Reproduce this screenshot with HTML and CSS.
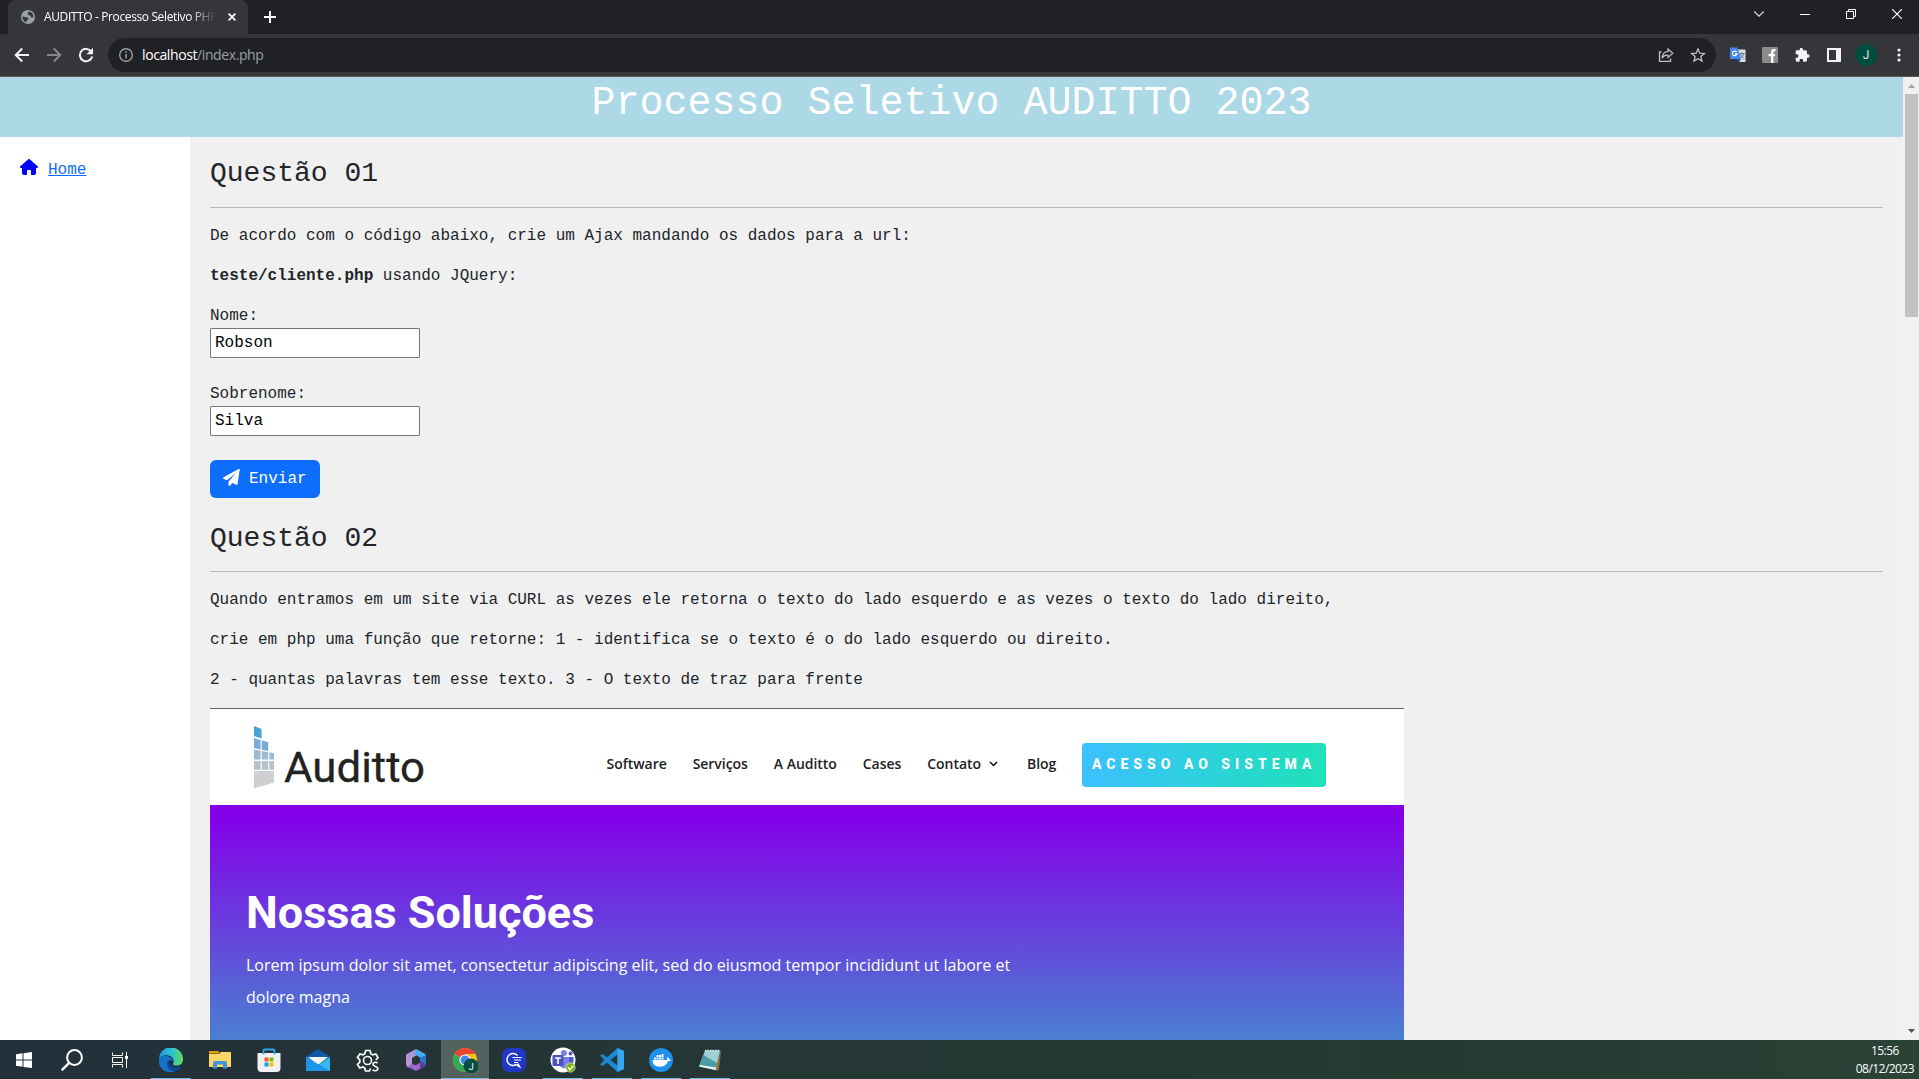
FILE: index.html
```html
<!DOCTYPE html>
<html lang="pt-BR">
<head>
<meta charset="utf-8">
<title>AUDITTO - Processo Seletivo PHP</title>
<link rel="stylesheet" href="styles.css">
</head>
<body>
<div class="tabstrip">
  <div class="tab">
    <svg class="globe" width="14" height="14" viewBox="0 0 14 14"><circle cx="7" cy="7" r="7" fill="#9aa0a6"/><path d="M1.5 6.2L4.3 7.3 7 7.6 7.4 9.4 5.6 10.6 5.4 12.4C3 11.800 1.300 9.500 1.500 6.200zM8 1.600L6.800 3.600 7.300 5.200 9.600 5.600 10 7.600 12.400 7.500C12.600 4.400 10.600 2 8 1.600z" fill="#35363a"/></svg>
    <span class="tab-title">AUDITTO - Processo Seletivo PHP</span>
    <svg class="tab-close" width="8" height="8" viewBox="0 0 8 8"><path d="M.6.6l6.800 6.800M7.400.6L.6 7.400" stroke="#fff" stroke-width="1.700"/></svg>
  </div>
  <svg class="newtab" width="12" height="12" viewBox="0 0 12 12"><path d="M6 0v12M0 6h12" stroke="#fff" stroke-width="2"/></svg>
  <div class="win">
    <svg width="10" height="10" viewBox="0 0 10 10"><path d="M.3 2.500L5 7.200 9.700 2.500" fill="none" stroke="#ddd" stroke-width="1.100"/></svg>
    <svg width="10" height="10" viewBox="0 0 10 10"><path d="M0 5.500h10" stroke="#fff"/></svg>
    <svg width="10" height="10" viewBox="0 0 10 10"><path d="M.5 2.500h7v7h-7zM2.500 2V.5h7v7H8" fill="none" stroke="#fff"/></svg>
    <svg width="10" height="10" viewBox="0 0 10 10"><path d="M0 0l10 10M10 0L0 10" stroke="#fff" stroke-width="1.100"/></svg>
  </div>
</div>
<div class="toolbar">
  <svg class="nav-ic" width="16" height="16" viewBox="0 0 16 16"><path d="M15 8H2M8.200 1.500L1.700 8l6.500 6.500" fill="none" stroke="#f1f3f4" stroke-width="2"/></svg>
  <svg class="nav-ic" width="16" height="16" viewBox="0 0 16 16"><path d="M1 8h13M7.800 1.500L14.300 8l-6.500 6.500" fill="none" stroke="#85878a" stroke-width="2"/></svg>
  <svg class="nav-ic" width="16" height="16" viewBox="0 0 16 16"><path d="M13.300 4.600A6.200 6.200 0 1 0 14.200 9.500" fill="none" stroke="#f1f3f4" stroke-width="2"/><path d="M15 .8v6.500H8.500z" fill="#f1f3f4"/></svg>
  <div class="omnibox">
    <svg width="14" height="14" viewBox="0 0 14 14"><circle cx="7" cy="7" r="6.300" fill="none" stroke="#9aa0a6" stroke-width="1.400"/><path d="M7 6v4.500M7 3.200v1.600" stroke="#9aa0a6" stroke-width="1.500"/></svg>
    <span class="url"><b>localhost</b>/index.php</span>
    <svg class="share" width="16" height="16" viewBox="0 0 16 16"><path d="M3.500 5H1.500v9.300h11V11.500" fill="none" stroke="#bdc1c6" stroke-width="1.300"/><path d="M10 2l4.800 4.300L10 10.500V8.200C7 8 5.200 9 4 11.200 4.300 7.500 6.300 4.800 10 4.400z" fill="none" stroke="#bdc1c6" stroke-width="1.200"/></svg>
    <svg width="16" height="16" viewBox="0 0 16 16"><path d="M8 2l1.800 4.200 4.600.4-3.500 3 1.100 4.500L8 11.700l-4 2.400 1.100-4.500-3.500-3 4.600-.4z" fill="none" stroke="#bdc1c6" stroke-width="1.300"/></svg>
  </div>
  <div class="exts">
    <svg width="16" height="16" viewBox="0 0 16 16"><path d="M7 2.500h8.500v12.500H9z" fill="#dadce0"/><path d="M9.500 6.500h5M12 5.500v1M10.300 6.500c.8 2.500 2 4 3.500 5M13.700 6.500c-.6 2.500-2 4-3.700 5" stroke="#5f7d8c" fill="none"/><path d="M0 .5h7.500L11 12H0z" fill="#4285f4"/><path d="M7 12h4l-2 3.500z" fill="#2a56c6"/><path d="M6.600 5A2.300 2.300 0 1 0 7 6.700H4.800" fill="none" stroke="#fff" stroke-width="1.200"/></svg>
    <svg width="16" height="16" viewBox="0 0 16 16"><rect width="16" height="16" rx="1" fill="#8b8b8b"/><path d="M13.500 3.200H12q-1.800 0-1.800 1.800V16M6.500 8.200h6.500" fill="none" stroke="#fff" stroke-width="2.300"/></svg>
    <svg width="16" height="16" viewBox="0 0 24 24"><path d="M21 11h-1.500V7a2 2 0 0 0-2-2h-4V3.500a2.500 2.500 0 0 0-5 0V5h-4a2 2 0 0 0-2 2v3.800H4a2.700 2.700 0 0 1 0 5.400H2.500V20a2 2 0 0 0 2 2h3.800v-1.500a2.700 2.700 0 0 1 5.400 0V22h3.800a2 2 0 0 0 2-2v-4H21a2.500 2.500 0 0 0 0-5z" fill="#f1f3f4"/></svg>
    <svg class="panel" width="14" height="14" viewBox="0 0 14 14"><path d="M0 0h14v14H0zM2 2v10h7V2z" fill="#f1f3f4" fill-rule="evenodd"/></svg>
    <span class="avatar">J</span>
    <svg width="4" height="16" viewBox="0 0 4 16"><g fill="#f1f3f4"><circle cx="2" cy="3" r="1.600"/><circle cx="2" cy="8" r="1.600"/><circle cx="2" cy="13" r="1.600"/></g></svg>
  </div>
</div>
<div class="viewport">
  <div class="page">
    <header class="banner"><h1>Processo Seletivo AUDITTO 2023</h1></header>
    <div class="columns">
      <nav class="side">
        <svg width="18" height="16" viewBox="0 0 576 512"><path fill="#00f" d="M575.800 255.500c0 18-15 32.100-32 32.100h-32l.7 160.200c0 35-28 64-64 64H384c-18 0-32-14-32-32v-96c0-18-14-32-32-32h-64c-18 0-32 14-32 32v96c0 18-14 32-32 32h-64c-36 0-64-29-64-64V287.600H32c-18 0-32-14-32-32.100 0-9 3-17 10-24L266.400 8c7-7 15-8 22-8s15 2 21 7l255.400 224.500c8 7 12 15 11 24z"/></svg>
        <a href="#">Home</a>
      </nav>
      <main class="main">
        <h3>Questão 01</h3>
        <hr>
        <p>De acordo com o código abaixo, crie um Ajax mandando os dados para a url:</p>
        <p><b>teste/cliente.php</b> usando JQuery:</p>
        <form class="form">
          <label class="field">Nome:<input type="text" value="Robson"></label>
          <label class="field">Sobrenome:<input type="text" value="Silva"></label>
          <button type="button" class="send"><svg width="17" height="17" viewBox="0 0 17 17"><path d="M16.800.3L14.500 15.200c-.1.600-.6.800-1.100.6L9.300 14 7 16.700c-.5.5-1.500.2-1.500-.6V12.700L13 3.800 4 11.300.7 10c-.8-.4-.9-1.300-.1-1.700L15.700.1c.6-.3 1.200-.2 1.100.2z" fill="#fff"/></svg>Enviar</button>
        </form>
        <h3>Questão 02</h3>
        <hr>
        <p>Quando entramos em um site via CURL as vezes ele retorna o texto do lado esquerdo e as vezes o texto do lado direito,</p>
        <p>crie em php uma função que retorne: 1 - identifica se o texto é o do lado esquerdo ou direito.</p>
        <p>2 - quantas palavras tem esse texto. 3 - O texto de traz para frente</p>
        <section class="shot">
          <div class="shot-head">
            <svg class="logo" width="174" height="64" viewBox="0 0 174 64">
              <g transform="scale(1.155 1)">
                <path d="M0 0l6.500 3v9.500L0 10z" fill="#46a3d7"/>
                <path d="M0 12l5.700 2v9.600L0 22zM6.700 14.300l5.600 2v8.700l-5.600-1.300z" fill="#78acd7"/>
                <path d="M0 23.500l5.700 1.200v8.800H0zM6.700 25l5.600 1.200v7.300H6.700zM13.300 26.300l4 1v6.200h-4z" fill="#9db9d3"/>
                <path d="M0 35h5.700v8.700H0zM6.700 35h5.600v8.700H6.700zM13.300 35h4v8.700h-4z" fill="#b4c2cc"/>
                <path d="M0 45h17.300v11.500L0 62.500z" fill="#cfcfd2"/>
              </g>
              <text x="30" y="56" textLength="141" lengthAdjust="spacingAndGlyphs">Auditto</text>
            </svg>
            <nav class="menu">
              <span>Software</span><span>Serviços</span><span>A Auditto</span><span>Cases</span>
              <span class="drop">Contato<svg width="9" height="6" viewBox="0 0 9 6"><path d="M1 1l3.500 3.500L8 1" fill="none" stroke="#111" stroke-width="1.500"/></svg></span>
              <span>Blog</span>
            </nav>
            <span class="access">ACESSO AO SISTEMA</span>
          </div>
          <div class="hero">
            <h2>Nossas Soluções</h2>
            <div class="lead">Lorem ipsum dolor sit amet, consectetur adipiscing elit, sed do eiusmod tempor incididunt ut labore et<br>dolore magna</div>
          </div>
        </section>
      </main>
    </div>
  </div>
  <div class="scroll">
    <svg width="7" height="4" viewBox="0 0 7 4"><path d="M0 4L3.500 0 7 4z" fill="#a3a3a3"/></svg>
    <div class="thumb"></div>
    <svg width="7" height="4" viewBox="0 0 7 4"><path d="M0 0l3.500 4L7 0z" fill="#505050"/></svg>
  </div>
</div>
<div class="taskbar">
  <div class="sys">
    <span class="cell"><svg width="16" height="16" viewBox="0 0 16 16"><path d="M0 2.300L6.500 1.300V7.500H0zM7.500 1.200L16 0v7.500H7.500zM0 8.500h6.500v6.300L0 13.800zM7.500 8.500H16V16L7.500 14.900z" fill="#fff"/></svg></span>
    <span class="cell"><svg width="22" height="22" viewBox="0 0 22 22"><circle cx="13.500" cy="8.500" r="7.400" fill="none" stroke="#fff" stroke-width="2"/><path d="M8.200 13.800L.8 21.200" stroke="#fff" stroke-width="2.400"/></svg></span>
    <span class="cell"><svg width="16" height="16" viewBox="0 0 16 16"><path d="M.5.500v3h10v-3M.5 15.500v-3h10v3M.5 5.500h10v5H.500zM14.500 0v16" fill="none" stroke="#fff"/><path d="M13 4h3v3h-3z" fill="#fff"/></svg></span>
  </div>
  <div class="apps">
    <span class="cell on"><svg width="24" height="24" viewBox="0 0 24 24"><defs><linearGradient id="eg" x1="0" x2="1"><stop offset="0" stop-color="#1b9de2"/><stop offset=".55" stop-color="#2fc2d0"/><stop offset="1" stop-color="#62dd57"/></linearGradient></defs><path d="M0 11A12 12 0 0 1 24 11.500C24 16 20.500 17.500 17.500 17.500c-2.500 0-4-.9-3.500-2C16 13 14 8.500 9.500 7.500 5 6.500 1.500 8.500 0 11z" fill="url(#eg)"/><path d="M0 12C.5 8.500 4.500 7 8.500 8c3 .8 5 3 5.500 5-2.500-2-6.500 0-5.500 4.500C9.500 21.500 13 23 16 23.200 7 26.500-1 20.500 0 12z" fill="#1672c9"/><path d="M9 12.500C6.500 17 10 23 16 23.200c3-.7 5.500-2.700 6.500-5.200-5 3-12 1.500-13.500-5.500z" fill="#0c499b"/></svg></span>
    <span class="cell"><svg width="22" height="18" viewBox="0 0 22 18"><path d="M0 0h9l2 2.500H0z" fill="#e4a100"/><path d="M0 3h10l2-2h10v15H0z" fill="#ffd768"/><path d="M4 17.500V12q0-2 2-2h10q2 0 2 2v5.500h-4v-4H8v4z" fill="#3e96dc"/></svg></span>
    <span class="cell"><svg width="24" height="24" viewBox="0 0 24 24"><path d="M.5 5h23v15q0 4-4 4h-15q-4 0-4-4z" fill="#f1f1f1"/><path d="M6.500 6.500V2.500q0-1 1-1h9q1 0 1 1V6.500" fill="none" stroke="#2aaaf0" stroke-width="1.800"/><path d="M7.500 9.500h4v4h-4z" fill="#f35325"/><path d="M12.500 9.500h4v4h-4z" fill="#81bc06"/><path d="M7.500 14.500h4v4h-4z" fill="#05a6f0"/><path d="M12.500 14.500h4v4h-4z" fill="#ffba08"/></svg></span>
    <span class="cell"><svg width="24" height="24" viewBox="0 0 24 24"><path d="M0 8.500L12 1l12 7.500v5H0z" fill="#0f5aa8"/><path d="M2 9h20l-10 8z" fill="#f5f5f5"/><path d="M0 9l12 8 12-8v14H0z" fill="#35b7f1"/><path d="M0 9v14h24z" fill="#1b97e5"/></svg></span>
    <span class="cell"><svg width="24" height="24" viewBox="0 0 24 24"><path d="M15.500 20.500l-1 2.500h-4l-.7-3-2-1-3 1-2.300-3.600 2.300-2.200v-2.400L2.500 9.500 4.800 6l3 .8 2-1 .9-3.300H15l.8 3.300 2 1.100 3-.9 2.200 3.600-2.200 2.400" fill="none" stroke="#fff" stroke-width="1.700"/><circle cx="12.500" cy="12.500" r="4" fill="none" stroke="#fff" stroke-width="1.600"/><path d="M22.500 15c-2-1.300-4.600-.6-4.600 1.300 0 2.500 5 1.700 5 4.300 0 2.300-3.200 2.800-5.400 1.200" fill="none" stroke="#fff" stroke-width="1.600"/></svg></span>
    <span class="cell"><svg width="20" height="22" viewBox="0 0 20 22"><path d="M0 5.500L10 0v7L6 9.500V15l-3 4-1.500-1Q0 17 0 15z" fill="#b493d9"/><path d="M10 0l8.500 4.500Q20 5.300 20 7v8l-6-3V8.500L8.500 5.500z" fill="#45b2ef"/><path d="M14 8.500L20 6v9l-6-3z" fill="#2b77cf"/><path d="M1.500 17.500L6 15l4 1 4-3 6 2-1.500 2.500L10 22z" fill="#9a68cf"/><path d="M14 12l6 3-1.500 2.500L14 20z" fill="#5b3fa2"/><path d="M6 9l4-2.200L14 9v4.500L10 16l-4-2z" fill="#243635"/></svg></span>
    <span class="cell on active"><svg width="26" height="26" viewBox="-1 -1 26 26"><circle cx="12" cy="12" r="12" fill="#fbc116"/><path d="M12 12L1.600 6A12 12 0 0 1 22.400 6H12z" fill="#ea4335"/><path d="M1.600 6A12 12 0 0 0 12 24l5-9-5-3z" fill="#34a853"/><circle cx="12" cy="12" r="5.600" fill="#fff"/><circle cx="12" cy="12" r="4.500" fill="#4285f4"/><circle cx="18" cy="18" r="7.500" fill="#064e40"/><text class="badge-j" x="15.800" y="21.600">J</text></svg></span>
    <span class="cell"><svg width="24" height="24" viewBox="0 0 24 24"><rect width="24" height="24" rx="7" fill="#2038c5"/><path d="M15.500 7.500a6 6 0 1 0-1.500 9.200l3.500 2-1.500-3.200" fill="none" stroke="#fff" stroke-width="1.500"/><path d="M10.500 9.500h9M12 12h7M12 14.500h4" stroke="#fff" stroke-width="1.100"/></svg></span>
    <span class="cell on"><svg width="26" height="26" viewBox="0 0 26 26"><circle cx="13" cy="13" r="12.500" fill="#fff"/><circle cx="14" cy="6" r="3" fill="#7b83eb"/><circle cx="20.500" cy="6.500" r="2" fill="#5059c9"/><path d="M10 10h9v8a5 5 0 0 1-9 1z" fill="#7b83eb"/><path d="M19 10h4.500v5a3.500 3.500 0 0 1-4.500 3z" fill="#5059c9"/><rect x="2.500" y="8" width="11" height="11" rx="1" fill="#4b53bc"/><path d="M5 11h6M8 11v6" stroke="#fff" stroke-width="1.600"/><circle cx="20.500" cy="20.500" r="4.700" fill="#7ab317" stroke="#fff" stroke-width=".5"/><path d="M18 20.500l2 2 3.200-3.700" fill="none" stroke="#fff" stroke-width="1.300"/></svg></span>
    <span class="cell on"><svg width="24" height="24" viewBox="0 0 24 24"><path d="M17.500 0L24 3v18l-6.500 3L7 14.500 2.500 18 0 16.500 4.500 12 0 7.500 2.500 6 7 9.500zM17.500 6.500L10.500 12l7 5.500z" fill="#168ad5" fill-rule="evenodd"/><path d="M17.500 0L24 3v18l-6.500 3z" fill="#32a7ee"/></svg></span>
    <span class="cell on"><svg width="24" height="24" viewBox="0 0 24 24"><circle cx="12" cy="12" r="12" fill="#1d91ed"/><path d="M3.500 12h14.500q-.4-2 .8-3.200 1.200.8 1.200 2.400 1.500-.2 2 .5-.8 1.500-3 1.500-2 5.500-8.500 5.500-7 0-7-6.700zM5 9.500h2v2H5zM7.500 9.500h2v2h-2zM10 9.500h2v2h-2zM12.500 9.500h2v2h-2zM7.500 7h2v2h-2zM10 7h2v2h-2zM12.500 6h2v3h-2z" fill="#fff"/></svg></span>
    <span class="cell on"><svg width="24" height="24" viewBox="0 0 24 24"><path d="M19 4l4-1-2 19-4 1z" fill="#8b6c3c"/><path d="M7 2.500h15L17.500 22 1 18.500z" fill="#9ccfd6"/><path d="M5.500 7L1 18.500 17.500 22 19 15z" fill="#4e9aa9"/><path d="M1 18.500L17.500 22l1-2.500L2 17z" fill="#e7eff0"/><path d="M7 2.500h15" stroke="#e7eff0" stroke-width="1.500" stroke-dasharray="1.500 1"/></svg></span>
  </div>
  <div class="clock"><span>15:56</span><span>08/12/2023</span></div>
</div>
</body>
</html>
```
FILE: styles.css
```css
* { box-sizing: border-box; }
body {
  margin: 0;
  width: 1919px;
  height: 1079px;
  overflow: hidden;
  display: flex;
  flex-direction: column;
  font-family: "Liberation Mono", monospace;
  font-size: 16px;
  line-height: 1.5;
  color: #212529;
}
svg { display: block; flex: none; }

/* browser chrome */
.tabstrip {
  flex: none;
  height: 34px;
  background: #202124;
  display: flex;
  align-items: center;
  padding-left: 8px;
}
.tab {
  width: 240px;
  height: 34px;
  background: #35363a;
  border-radius: 8px 8px 0 0;
  display: flex;
  align-items: center;
  padding-left: 13px;
}
.tab-title {
  width: 172px;
  margin-left: 9px;
  overflow: hidden;
  white-space: nowrap;
  font: 12px/16px "Open Sans", sans-serif;
  letter-spacing: -0.38px;
  color: #fff;
  -webkit-mask-image: linear-gradient(to right, #000 145px, transparent 172px);
  mask-image: linear-gradient(to right, #000 145px, transparent 172px);
}
.tab-close { margin-left: 12px; }
.newtab { margin-left: 16px; }
.win {
  margin-left: auto;
  margin-right: 17px;
  margin-bottom: 6px;
  display: flex;
  gap: 36px;
}
.toolbar {
  flex: none;
  height: 43px;
  background: #35363a;
  border-bottom: 1px solid #5b5a5c;
  display: flex;
  align-items: center;
  padding-left: 14px;
}
.nav-ic { margin-right: 16px; }
.omnibox {
  width: 1608px;
  height: 34px;
  margin-left: -2px;
  border-radius: 17px;
  background: #202124;
  display: flex;
  align-items: center;
  padding: 0 10px 0 11px;
}
.url {
  margin-left: 9px;
  font: 14px/20px "Open Sans", sans-serif;
  letter-spacing: -0.4px;
  color: #9aa0a6;
}
.url b { font-weight: 400; color: #fff; }
.share { margin-left: auto; margin-right: 16px; }
.exts {
  display: flex;
  align-items: center;
  gap: 16px;
  margin-left: 14px;
}
.panel { margin-left: 1px; }
.avatar {
  width: 22px;
  height: 22px;
  margin-left: -2px;
  border-radius: 50%;
  background: #004d40;
  color: #dfe9e7;
  font: 12px/22px Roboto, sans-serif;
  text-align: center;
}
.exts svg:last-child { margin-left: 4px; }

/* page */
.viewport { flex: 1; min-height: 0; display: flex; }
.page {
  width: 1903px;
  overflow: hidden;
  display: flex;
  flex-direction: column;
}
.banner {
  flex: none;
  height: 60px;
  padding-top: 3px;
  background: lightblue;
}
.banner h1 {
  margin: 0;
  font-size: 40px;
  font-weight: 400;
  line-height: 48px;
  text-align: center;
  color: #fff;
}
.columns { flex: 1; min-height: 0; display: flex; }
.side {
  width: 190px;
  background: #fff;
  padding: 20px;
  display: flex;
  align-items: flex-start;
  gap: 10px;
}
.side svg { margin-top: 2px; }
.side a { margin-top: 1px; color: #0d6efd; text-decoration: underline; }
.main {
  flex: 1;
  background: #f0f0f0;
  padding: 20px 20px 0;
}
.main h3 {
  margin: 0;
  font-size: 28px;
  font-weight: 400;
  line-height: 1.2;
}
.main hr {
  height: 1px;
  margin: 16px 0;
  border: 0;
  background: #b9babb;
}
.main p { margin: 0 0 16px; white-space: nowrap; }
.form {
  display: flex;
  flex-direction: column;
  align-items: flex-start;
  gap: 24px;
  margin-bottom: 24px;
}
.field { display: flex; flex-direction: column; }
.field input {
  width: 210px;
  height: 30px;
  margin: 0;
  padding: 1px 4px 0;
  border: 1px solid #767676;
  border-radius: 1px;
  background: #fff;
  font: inherit;
  color: #000;
}
.send {
  width: 110px;
  height: 38px;
  padding: 0 12px 0 13px;
  border: 0;
  border-radius: 6px;
  background: #0d6efd;
  color: #fff;
  font: inherit;
  display: flex;
  align-items: center;
  gap: 9px;
}
.send svg { margin-bottom: 3px; }

/* site preview */
.shot {
  width: 1194px;
  font-family: "Open Sans", sans-serif;
}
.shot-head {
  height: 97px;
  border-top: 1px solid #666;
  background: #fff;
  display: flex;
  align-items: flex-start;
  padding: 17px 0 0 44px;
}
.logo text {
  font: 400 42px Roboto, sans-serif;
  fill: #222;
  stroke: #222;
  stroke-width: 0.3px;
}
.logo { overflow: visible; }
.menu {
  display: flex;
  gap: 26px;
  margin: 28px 0 0 178.5px;
  font-size: 14px;
  font-weight: 600;
  line-height: 20px;
  letter-spacing: -0.04px;
  color: #222;
  white-space: nowrap;
}
.drop { display: flex; align-items: center; gap: 8px; margin-right: 3px; }
.access {
  width: 244px;
  height: 44px;
  margin: 17px 78px 0 auto;
  padding-left: 10px;
  border-radius: 4px;
  background: linear-gradient(90deg, #3bc1ff, #1fe1b7);
  color: #fff;
  font: 800 14px/43px Roboto, sans-serif;
  letter-spacing: 5px;
  white-space: nowrap;
}
.hero {
  height: 400px;
  padding: 81px 36px;
  background: linear-gradient(#8300e9 0, #8300e9 10px, #4a80d0 235px, #29c4c4 400px);
  color: #fff;
}
.hero h2 {
  margin: 0;
  font: 700 45px/54px Roboto, sans-serif;
}
.lead { margin-top: 9px; font-size: 16px; line-height: 32px; white-space: nowrap; }

.scroll {
  width: 16px;
  background: #f1f1f1;
  display: flex;
  flex-direction: column;
  align-items: center;
  padding: 7px 0;
}
.thumb { width: 13px; height: 223px; margin: 6px 0 auto; background: #c1c1c1; }

/* taskbar */
.taskbar {
  flex: none;
  height: 39px;
  background: linear-gradient(90deg, #22303c, #243436 22%, #243833 55%, #243a31 75%, #2b4237);
  display: flex;
}
.sys { display: flex; margin-right: 3px; }
.apps { display: flex; gap: 1px; }
.cell {
  width: 48px;
  height: 39px;
  display: flex;
  align-items: center;
  justify-content: center;
  padding-top: 1px;
}
.cell.on {
  background: linear-gradient(#76b9ed, #76b9ed) center bottom / 40px 1px no-repeat;
}
.cell.active { background-color: #53615f; background-size: 48px 1px; }
.badge-j { font: 9px Roboto, sans-serif; fill: #fff; }
.clock {
  margin-left: auto;
  margin-right: 5px;
  padding-top: 2px;
  display: flex;
  flex-direction: column;
  align-items: center;
  font: 12px/18px "Open Sans", sans-serif;
  letter-spacing: -0.55px;
  color: #fff;
}
```
